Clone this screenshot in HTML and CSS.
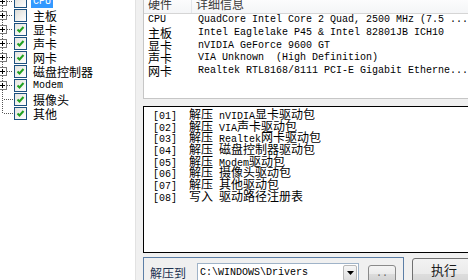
FILE: index.html
```html
<!DOCTYPE html>
<html>
<head>
<meta charset="utf-8">
<link rel="stylesheet" href="styles.css">
</head>
<body>
<div class="app">
  <div class="tree">
    <ul class="nodes">
      <li class="node">
        <svg class="lines" width="14" height="14" viewBox="0 0 14 14"><path d="M2.5 0V3M2.5 12V14M7 7.5H13" stroke="#555" stroke-dasharray="1 1" fill="none"/><rect x="-1.5" y="3.5" width="8" height="8" fill="#fff" stroke="#7a7a7a"/><path d="M0 7.5H5M2.5 5V10" stroke="#000"/></svg>
        <span class="chk"></span><span class="label sel">CPU</span>
      </li>
      <li class="node">
        <svg class="lines" width="14" height="14" viewBox="0 0 14 14"><path d="M2.5 0V3M2.5 12V14M7 7.5H13" stroke="#555" stroke-dasharray="1 1" fill="none"/><rect x="-1.5" y="3.5" width="8" height="8" fill="#fff" stroke="#7a7a7a"/><path d="M0 7.5H5M2.5 5V10" stroke="#000"/></svg>
        <span class="chk"></span><span class="label"><span class="z">主板</span></span>
      </li>
      <li class="node">
        <svg class="lines" width="14" height="14" viewBox="0 0 14 14"><path d="M2.5 0V3M2.5 12V14M7 7.5H13" stroke="#555" stroke-dasharray="1 1" fill="none"/><rect x="-1.5" y="3.5" width="8" height="8" fill="#fff" stroke="#7a7a7a"/><path d="M0 7.5H5M2.5 5V10" stroke="#000"/></svg>
        <span class="chk on"><svg width="11" height="11" viewBox="0 0 11 11"><path d="M2.5 5.5L4.5 7.5L8.5 3" stroke="#21a121" stroke-width="2" fill="none"/></svg></span><span class="label"><span class="z">显卡</span></span>
      </li>
      <li class="node">
        <svg class="lines" width="14" height="14" viewBox="0 0 14 14"><path d="M2.5 0V3M2.5 12V14M7 7.5H13" stroke="#555" stroke-dasharray="1 1" fill="none"/><rect x="-1.5" y="3.5" width="8" height="8" fill="#fff" stroke="#7a7a7a"/><path d="M0 7.5H5M2.5 5V10" stroke="#000"/></svg>
        <span class="chk on"><svg width="11" height="11" viewBox="0 0 11 11"><path d="M2.5 5.5L4.5 7.5L8.5 3" stroke="#21a121" stroke-width="2" fill="none"/></svg></span><span class="label"><span class="z">声卡</span></span>
      </li>
      <li class="node">
        <svg class="lines" width="14" height="14" viewBox="0 0 14 14"><path d="M2.5 0V3M2.5 12V14M7 7.5H13" stroke="#555" stroke-dasharray="1 1" fill="none"/><rect x="-1.5" y="3.5" width="8" height="8" fill="#fff" stroke="#7a7a7a"/><path d="M0 7.5H5M2.5 5V10" stroke="#000"/></svg>
        <span class="chk on"><svg width="11" height="11" viewBox="0 0 11 11"><path d="M2.5 5.5L4.5 7.5L8.5 3" stroke="#21a121" stroke-width="2" fill="none"/></svg></span><span class="label"><span class="z">网卡</span></span>
      </li>
      <li class="node">
        <svg class="lines" width="14" height="14" viewBox="0 0 14 14"><path d="M2.5 0V3M2.5 12V14M7 7.5H13" stroke="#555" stroke-dasharray="1 1" fill="none"/><rect x="-1.5" y="3.5" width="8" height="8" fill="#fff" stroke="#7a7a7a"/><path d="M0 7.5H5M2.5 5V10" stroke="#000"/></svg>
        <span class="chk on"><svg width="11" height="11" viewBox="0 0 11 11"><path d="M2.5 5.5L4.5 7.5L8.5 3" stroke="#21a121" stroke-width="2" fill="none"/></svg></span><span class="label"><span class="z">磁盘控制器</span></span>
      </li>
      <li class="node">
        <svg class="lines" width="14" height="14" viewBox="0 0 14 14"><path d="M2.5 0V3M2.5 12V14M7 7.5H13" stroke="#555" stroke-dasharray="1 1" fill="none"/><rect x="-1.5" y="3.5" width="8" height="8" fill="#fff" stroke="#7a7a7a"/><path d="M0 7.5H5M2.5 5V10" stroke="#000"/></svg>
        <span class="chk on"><svg width="11" height="11" viewBox="0 0 11 11"><path d="M2.5 5.5L4.5 7.5L8.5 3" stroke="#21a121" stroke-width="2" fill="none"/></svg></span><span class="label">Modem</span>
      </li>
      <li class="node">
        <svg class="lines" width="14" height="14" viewBox="0 0 14 14"><path d="M2.5 0V14M4 7.5H13" stroke="#555" stroke-dasharray="1 1" fill="none"/></svg>
        <span class="chk on"><svg width="11" height="11" viewBox="0 0 11 11"><path d="M2.5 5.5L4.5 7.5L8.5 3" stroke="#21a121" stroke-width="2" fill="none"/></svg></span><span class="label"><span class="z">摄像头</span></span>
      </li>
      <li class="node">
        <svg class="lines" width="14" height="14" viewBox="0 0 14 14"><path d="M2.5 0V8M4 7.5H13" stroke="#555" stroke-dasharray="1 1" fill="none"/></svg>
        <span class="chk on"><svg width="11" height="11" viewBox="0 0 11 11"><path d="M2.5 5.5L4.5 7.5L8.5 3" stroke="#21a121" stroke-width="2" fill="none"/></svg></span><span class="label"><span class="z">其他</span></span>
      </li>
    </ul>
  </div>
  <div class="right">
    <div class="list">
      <div class="head">
        <div class="hc1">硬件</div>
        <div class="hc2">详细信息</div>
      </div>
      <div class="row"><div class="c1">CPU</div><div class="c2">QuadCore Intel Core 2 Quad, 2500 MHz (7.5 ...</div></div>
      <div class="row"><div class="c1"><span class="z">主板</span></div><div class="c2">Intel Eaglelake P45 &amp; Intel 82801JB ICH10</div></div>
      <div class="row"><div class="c1"><span class="z">显卡</span></div><div class="c2">nVIDIA GeForce 9600 GT</div></div>
      <div class="row"><div class="c1"><span class="z">声卡</span></div><div class="c2">VIA Unknown  (High Definition)</div></div>
      <div class="row"><div class="c1"><span class="z">网卡</span></div><div class="c2">Realtek RTL8168/8111 PCI-E Gigabit Etherne...</div></div>
    </div>
    <div class="log">
      <div class="ln">[01]  <span class="z">解压</span> nVIDIA<span class="z">显卡驱动包</span></div>
      <div class="ln">[02]  <span class="z">解压</span> VIA<span class="z">声卡驱动包</span></div>
      <div class="ln">[03]  <span class="z">解压</span> Realtek<span class="z">网卡驱动包</span></div>
      <div class="ln">[04]  <span class="z">解压</span> <span class="z">磁盘控制器驱动包</span></div>
      <div class="ln">[05]  <span class="z">解压</span> Modem<span class="z">驱动包</span></div>
      <div class="ln">[06]  <span class="z">解压</span> <span class="z">摄像头驱动包</span></div>
      <div class="ln">[07]  <span class="z">解压</span> <span class="z">其他驱动包</span></div>
      <div class="ln">[08]  <span class="z">写入</span> <span class="z">驱动路径注册表</span></div>
    </div>
    <div class="bottom">
      <div class="group">
        <div class="glabel">解压到</div>
        <div class="combo">
          <div class="ctext">C:\WINDOWS\Drivers</div>
          <div class="cbtn"><svg width="7" height="4" viewBox="0 0 7 4"><path d="M0 0H7L3.5 4Z" fill="#000"/></svg></div>
        </div>
        <div class="browse">..</div>
      </div>
      <div class="run">执行</div>
    </div>
  </div>
</div>
</body>
</html>
```

FILE: styles.css
```css
* { box-sizing: border-box; margin: 0; padding: 0; }
html, body { width: 468px; height: 280px; overflow: hidden; }
body {
  font-family: "Liberation Mono", "Noto Sans CJK SC", monospace;
  font-size: 10px;
  color: #000;
  background: #f0f0f0;
}
.z { font-size: 12px; font-family: "Noto Sans CJK SC", "Liberation Mono", sans-serif; }

.app { display: flex; height: 280px; }

/* tree */
.tree { width: 135px; flex: none; background: #fff; overflow: hidden; }
.nodes { list-style: none; margin-top: -6px; }
.node { display: flex; align-items: center; height: 14px; }
.lines { flex: none; overflow: visible; display: block; }
.chk {
  width: 13px; height: 13px; flex: none;
  border: 1px solid #1c5180;
  background: linear-gradient(135deg, #dcdcd7, #ffffff);
  display: flex; align-items: center; justify-content: center;
}
.chk svg { display: block; }
.chk.on { background: linear-gradient(135deg, #e4e4df, #ffffff); }
.label {
  display: block;
  margin-left: 4px; padding: 0 2px;
  height: 13px; line-height: 13px;
  white-space: pre;
}
.label.sel { background: #3399ff; color: #fff; }

/* right side */
.right {
  flex: 1; min-width: 0;
  border-left: 1px solid #e2e2e2;
  padding-left: 7px;
  display: flex; flex-direction: column;
  overflow: hidden;
}
.list {
  margin-top: -7px;
  height: 106px; width: 340px; flex: none;
  background: #fff;
  border: 1px solid #c6c6c6;
}
.head {
  display: flex; height: 20px;
  border-bottom: 1px solid #d5d5d5;
  background: linear-gradient(#ffffff, #f4f5f7);
  font-family: "Noto Sans CJK SC", sans-serif;
  font-size: 12px; color: #3a3a3a;
  line-height: 19px;
}
.hc1 {
  width: 48px; flex: none; padding-left: 4px;
  border-right: 1px solid #e3e6ea;
}
.hc2 { padding-left: 4px; }
.row { display: flex; height: 12.8px; line-height: 12.8px; white-space: pre; }
.c1 { width: 48px; flex: none; padding-left: 4px; }
.c2 { padding-left: 6px; }

.log {
  margin-top: 7px;
  height: 147px; width: 340px; flex: none;
  background: #fff;
  border: 1px solid #000;
  padding: 1px 0 0 9px;
}
.ln { display: block; height: 11.7px; line-height: 11.7px; white-space: pre; }

.bottom { display: flex; margin-top: 4px; gap: 8px; flex: none; }
.group {
  width: 261px; height: 40px; flex: none;
  border: 1px solid #5b7ea6;
  display: flex; align-items: flex-start;
  padding: 5px 0 0 6px;
}
.glabel {
  font-family: "Noto Sans CJK SC", sans-serif;
  font-size: 12px; color: #1e3250;
  height: 20px; line-height: 20px;
}
.combo {
  margin-left: 11px;
  width: 162px; height: 20px;
  border: 1px solid #9fb3c8;
  background: #fff;
  display: flex; align-items: center;
}
.ctext { flex: 1; padding-left: 2px; white-space: pre; line-height: 18px; }
.cbtn {
  width: 14px; height: 16px; margin-right: 1px;
  border: 1px solid #b8b8b8; border-radius: 2px;
  background: linear-gradient(#f6f6f6, #dedede);
  display: flex; align-items: center; justify-content: center;
}
.cbtn svg { display: block; }
.browse {
  margin-left: 9px; margin-top: 2px;
  width: 28px; height: 18px;
  border: 1px solid #8a8a8a; border-radius: 3px;
  background: linear-gradient(#f4f4f4 0%, #ebebeb 50%, #dcdcdc 51%, #d0d0d0 100%);
  color: #666;
  text-align: center; line-height: 16px;
}
.run {
  margin-top: 1px;
  width: 64px; height: 32px; flex: none;
  border: 1px solid #707070; border-radius: 3px;
  background: linear-gradient(#f2f2f2 0%, #ebebeb 50%, #dddddd 51%, #cfcfcf 100%);
  font-family: "Noto Sans CJK SC", sans-serif;
  font-size: 13px; color: #1b1b1b;
  text-align: center; line-height: 22px;
}
```
